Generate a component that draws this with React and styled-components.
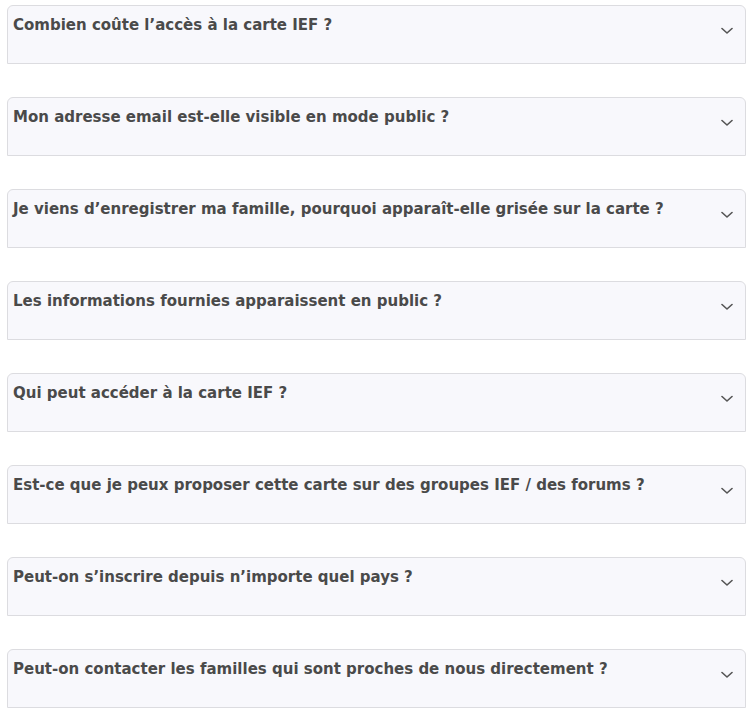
import React from 'react';
import styled, { createGlobalStyle } from 'styled-components';

const questions = [
  "Combien coûte l’accès à la carte IEF ?",
  "Mon adresse email est-elle visible en mode public ?",
  "Je viens d’enregistrer ma famille, pourquoi apparaît-elle grisée sur la carte ?",
  "Les informations fournies apparaissent en public ?",
  "Qui peut accéder à la carte IEF ?",
  "Est-ce que je peux proposer cette carte sur des groupes IEF / des forums ?",
  "Peut-on s’inscrire depuis n’importe quel pays ?",
  "Peut-on contacter les familles qui sont proches de nous directement ?",
];

function Chevron() {
  return (
    <svg width="12" height="8" viewBox="0 0 12 8" fill="none">
      <path d="M1 1.5 L6 6 L11 1.5" stroke="#555" strokeWidth="1.6" strokeLinecap="round" strokeLinejoin="round" />
    </svg>
  );
}

export default function App() {
  return (
    <>
      <GlobalStyle />
      <List>
        {questions.map((q) => (
          <Item key={q}>
            <Question>{q}</Question>
            <Toggle><Chevron /></Toggle>
          </Item>
        ))}
      </List>
    </>
  );
}

const GlobalStyle = createGlobalStyle`
  body {
    margin: 0;
    background: #fff;
    font-family: "DejaVu Sans", Inter, sans-serif;
  }
`;

const List = styled.div`
  display: flex;
  flex-direction: column;
  gap: 33px;
  padding: 5px 5px 0 7px;
`;

const Item = styled.div`
  display: flex;
  justify-content: space-between;
  align-items: flex-start;
  box-sizing: border-box;
  height: 59px;
  padding: 9px 12px 0 5px;
  border: 1px solid #dcdce0;
  border-radius: 6px 6px 0 0;
  background: #f8f8fc;
`;

const Question = styled.div`
  font-size: 15px;
  line-height: 20px;
  font-weight: 700;
  color: #4a4a4a;
`;

const Toggle = styled.div`
  display: flex;
  margin-top: 12px;
`;
